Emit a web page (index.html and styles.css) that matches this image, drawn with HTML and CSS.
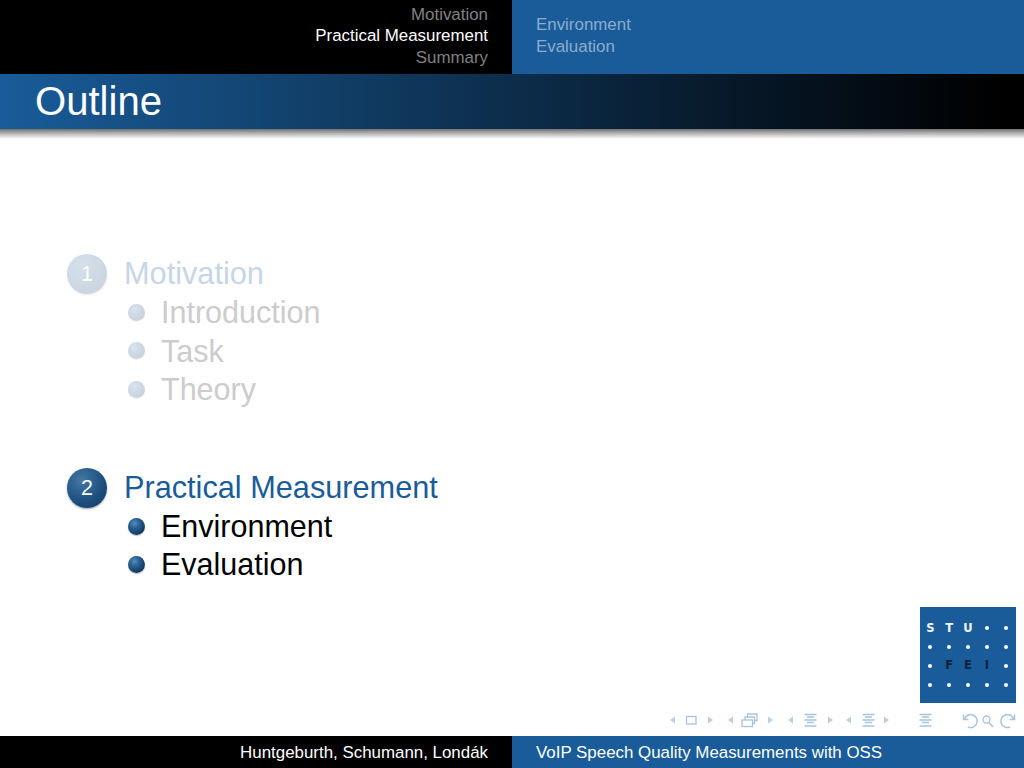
FILE: index.html
```html
<!DOCTYPE html>
<html lang="en">
<head>
<meta charset="utf-8">
<title>Outline</title>
<link rel="stylesheet" href="styles.css">
</head>
<body>
<div class="slide">
  <header class="headline">
    <nav class="head-left">
      <span class="dim">Motivation</span>
      <span>Practical Measurement</span>
      <span class="dim">Summary</span>
    </nav>
    <nav class="head-right">
      <span>Environment</span>
      <span>Evaluation</span>
    </nav>
  </header>
  <h1 class="frametitle">Outline</h1>
  <div class="title-shadow"></div>
  <main class="content">
    <section class="sec faded">
      <div class="sec-row"><span class="ball">1</span><span class="sec-name">Motivation</span></div>
      <div class="sub"><span class="dot"></span><span>Introduction</span></div>
      <div class="sub"><span class="dot"></span><span>Task</span></div>
      <div class="sub"><span class="dot"></span><span>Theory</span></div>
    </section>
    <section class="sec">
      <div class="sec-row"><span class="ball">2</span><span class="sec-name">Practical Measurement</span></div>
      <div class="sub"><span class="dot"></span><span>Environment</span></div>
      <div class="sub"><span class="dot"></span><span>Evaluation</span></div>
    </section>
  </main>
  <div class="logo">
    <span class="l">S</span><span class="l">T</span><span class="l">U</span><i></i><i></i>
    <i></i><i></i><i></i><i></i><i></i>
    <i></i><span class="l dark">F</span><span class="l dark">E</span><span class="l dark">I</span><i></i>
    <i></i><i></i><i></i><i></i><i></i>
  </div>
  <div class="navbar">
    <svg class="navsvg" width="369" height="24" viewBox="655 708 369 24" aria-hidden="true">
      <g class="fill">
        <path d="M675 716.500v7l-5-3.500z"/><path d="M708 716.500v7l5-3.500z"/>
        <path d="M733 716.500v7l-5-3.500z"/><path d="M768 716.500v7l5-3.500z"/>
        <path d="M793 716.500v7l-5-3.500z"/><path d="M828 716.500v7l5-3.500z"/>
        <path d="M851 716.500v7l-5-3.500z"/><path d="M884 716.500v7l5-3.500z"/>
      </g>
      <g class="line">
        <rect x="686.500" y="716.500" width="9.500" height="7.500"/>
        <rect x="742" y="720" width="10.500" height="6.500"/>
        <path d="M745 720v-3h9.500v6.500h-2M747.500 717v-3h9.500v6.500h-2.500"/>
        <path d="M804.500 714.500h12M807 717h7"/>
        <path d="M804.500 720h12M807 722.500h7M804.500 726h12" class="thick"/>
        <path d="M862.500 714.500h12M865 717h7"/>
        <path d="M862.500 720h12M865 722.500h7M862.500 726h12" class="thick"/>
        <path d="M919.500 714.500h12M922 717h7"/>
        <path d="M919.500 720h12M922 722.500h7M919.500 726h12" class="thick"/>
        <path d="M963.500 714.500v5h5M964.500 719A6.500 6.500 0 1 1 968 727" class="arc"/>
        <circle cx="986.500" cy="719.500" r="3.500"/><path d="M989 722.500l4 4.500" class="arc"/>
        <path d="M1014.500 714.500v5h-5M1013.500 719A6.500 6.500 0 1 0 1010 727" class="arc"/>
      </g>
    </svg>
  </div>
  <footer class="footline">
    <div class="foot-left">Huntgeburth, Schumann, Londák</div>
    <div class="foot-right">VoIP Speech Quality Measurements with OSS</div>
  </footer>
</div>
</body>
</html>
```
FILE: styles.css
```css
* { box-sizing: border-box; }
html, body { margin: 0; padding: 0; }
body { font-family: "Liberation Sans", Arial, sans-serif; background: #fff; color: #000; }
.slide { width: 1024px; height: 768px; display: flex; flex-direction: column; position: relative; overflow: hidden; }

.headline { height: 74px; display: flex; font-size: 16.900px; line-height: 21.600px; flex: none; padding-bottom: 2px; background: linear-gradient(to right, #000 50%, #195c99 50%); }
.head-left { width: 512px; color: #fff; display: flex; flex-direction: column; align-items: flex-end; justify-content: center; padding-right: 24px; }
.head-left .dim { color: #808080; }
.head-right { width: 512px; color: #8cadcc; display: flex; flex-direction: column; align-items: flex-start; justify-content: center; padding-left: 24px; }

.frametitle { margin: 0; flex: none; height: 55px; padding: 6px 0 0 35px; font-size: 40.100px; line-height: 42px; font-weight: normal; color: #fff; background: linear-gradient(to right, #195c99 0, #000 1000px); }
.title-shadow { flex: none; height: 10px; background: linear-gradient(to bottom, #707070 0, #a6a6a6 35%, #dedede 75%, #fff 100%); }

.content { flex: 1; padding: 116px 0 0 67px; font-size: 30.700px; line-height: 38.400px; display: flex; flex-direction: column; gap: 60px; }
.sec-row { display: flex; align-items: center; height: 38.400px; gap: 17px; color: #195c99; }
.sub { display: flex; align-items: center; height: 38.400px; padding-left: 61px; gap: 16px; font-size: 30.500px; }
.ball { width: 40px; height: 40px; border-radius: 50%; flex: none; font-size: 21.500px; line-height: 40px; text-align: center; color: #fff; background: radial-gradient(circle at 36% 30%, #47789f 0, #2c6190 32%, #1c4d7a 62%, #153a5e 100%); box-shadow: 0 1px 2px rgba(20, 50, 80, .45); }
.dot { width: 17px; height: 17px; border-radius: 50%; flex: none; background: radial-gradient(circle at 38% 32%, #5a8bb8 0, #2a6396 30%, #123a61 70%, #082340 100%); box-shadow: 0 1px 1px rgba(20, 50, 80, .35); }
.faded .ball, .faded .dot { opacity: .22; }
.faded .sec-row { color: #c6d6e6; }
.faded .sub { color: #ccc; }

.logo { position: absolute; left: 920px; top: 607px; width: 96px; height: 96px; background: #195c99; padding: 12px 1px 9px; display: grid; grid-template-columns: repeat(5, 18.800px); grid-template-rows: repeat(4, 18.800px); place-items: center; }
.logo i { width: 4px; height: 4px; border-radius: 50%; background: #fff; }
.l { font-family: "DejaVu Sans", sans-serif; font-weight: bold; font-size: 11.500px; line-height: 1; color: #f4f8fb; }
.l.dark { color: #0a2338; }

.navbar { position: absolute; left: 655px; top: 708px; display: flex; }
.navsvg { display: block; }
.fill { fill: #bcd0e3; }
.line { fill: none; stroke: #a9c3dc; stroke-width: 1.300; }
.thick { stroke-width: 1.500; }
.arc { stroke-width: 1.500; }

.footline { flex: none; height: 32px; display: flex; font-size: 16.900px; line-height: 33px; }
.foot-left { width: 512px; background: #000; color: #fff; text-align: right; padding-right: 24px; }
.foot-right { width: 512px; background: #195c99; color: #fff; padding-left: 24px; }
```
